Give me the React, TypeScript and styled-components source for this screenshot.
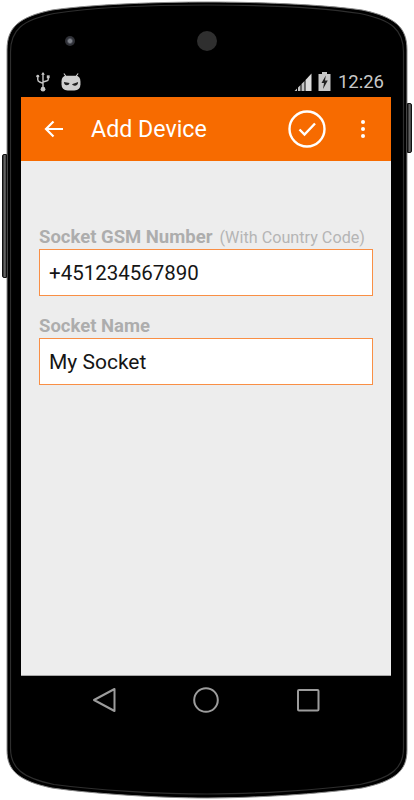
import styled, { createGlobalStyle } from 'styled-components'

const GlobalStyle = createGlobalStyle`
  html, body {
    margin: 0;
    padding: 0;
    background: #fff;
    font-family: Roboto, "Liberation Sans", sans-serif;
  }
`

const ShellPath = () => (
  <ShellSvg viewBox='0 0 414 800' aria-hidden='true'>
    <path
      d='M7 50 C7 27 19 17 52 10 C95 4 160 2 207 2 C254 2 319 4 362 10 C395 17 407 27 407 50 L407 750 C407 771 395 781 362 788 C319 794 254 798 207 798 C160 798 95 794 52 788 C19 781 7 771 7 750 Z'
      fill='#000'
      stroke='#8a8a8a'
      strokeWidth='1'
    />
    <path
      d='M10.5 52 C10.5 30 22 20 54 13.5 C96 7 160 5 207 5 C254 5 318 7 360 13.5 C392 20 403.500 30 403.500 52 L403.500 748 C403.500 768 392 778 360 784.500 C318 790 254 794 207 794 C160 794 96 790 54 784.500 C22 778 10.500 768 10.500 748 Z'
      fill='none'
      stroke='#2e2e2e'
      strokeWidth='1.2'
    />
  </ShellSvg>
)

export default function App() {
  return (
    <>
      <GlobalStyle />
      <Device>
        <ShellPath />
        <SideButton $side='left' />
        <SideButton $side='right' />

        <TopBezel>
          <Camera />
          <Speaker />
        </TopBezel>

        <StatusBar>
          <StatusGroup $gap={11}>
            <svg width='14' height='20' viewBox='0 0 14 21' aria-hidden='true'>
              <path d='M7 1 L7 16 M1.500 5.500 L1.500 8 Q1.500 10 3.500 10.500 L7 12 M12.500 5.500 L12.500 7.500 Q12.500 9 10.500 9.500 L7 10.500' fill='none' stroke='#c4c4c4' strokeWidth='1.5' />
              <path d='M7 0 L9 3 L5 3 Z' fill='#c4c4c4' />
              <circle cx='1.500' cy='4.500' r='1.500' fill='#c4c4c4' />
              <rect x='11' y='3.500' width='3' height='3' fill='#c4c4c4' />
              <circle cx='7' cy='18' r='2.500' fill='#c4c4c4' />
            </svg>
            <svg width='20' height='18' viewBox='0 0 21 19' aria-hidden='true'>
              <path d='M3 0.500 L5.500 4 M18 0.500 L15.500 4' stroke='#cfcfcf' strokeWidth='1.2' />
              <path d='M6 3 H15 Q20.500 3 20.500 9 V12 Q20.500 18.500 14 18.500 H7 Q0.500 18.500 0.500 12 V9 Q0.500 3 6 3 Z' fill='#cfcfcf' />
              <path d='M3 9.500 L9 10.500 Q8.500 13 6 13 Q3.500 13 3 9.500 Z M11.500 12 L18 9.500 Q18 13 15 13.500 Q12.500 13.800 11.500 12 Z' fill='#222' />
            </svg>
          </StatusGroup>
          <StatusGroup $gap={6}>
            <svg width='18' height='18' viewBox='0 0 18 18' aria-hidden='true'>
              <path d='M0.500 18 L3 15.500 V18 Z M4 14.500 L6.500 12 V18 H4 Z M7.500 11 L10.500 8 V18 H7.500 Z' fill='#c4c4c4' />
              <path d='M11.500 7 L17.500 0.500 V18 H11.500 Z' fill='#dcdcdc' />
            </svg>
            <svg width='13' height='19' viewBox='0 0 13 19' aria-hidden='true'>
              <path d='M4 0 H9 V2 H12.500 V19 H0.500 V2 H4 Z' fill='#c8c8c8' />
              <path d='M7.800 3.500 L3.500 11 H6 L5 17 L9.800 8.500 H7 Z' fill='#222' />
            </svg>
            <Clock>12:26</Clock>
          </StatusGroup>
        </StatusBar>

        <ActionBar>
          <BackArrow viewBox='0 0 20 18' aria-hidden='true'>
            <path d='M19 9 H2 M9.500 1.500 L2 9 L9.500 16.500' fill='none' stroke='#fff' strokeWidth='2.200' />
          </BackArrow>
          <Title>Add Device</Title>
          <ConfirmIcon viewBox='0 0 38 38' aria-hidden='true'>
            <circle cx='19' cy='19' r='17.500' fill='none' stroke='#fff' strokeWidth='2.400' />
            <path d='M11.500 19.500 L16.500 24.500 L27 13.500' fill='none' stroke='#fff' strokeWidth='2.400' />
          </ConfirmIcon>
          <Overflow>
            <Dot />
            <Dot />
            <Dot />
          </Overflow>
        </ActionBar>

        <Content>
          <Field>
            <LabelRow>
              <Label>Socket GSM Number</Label>
              <Hint>(With Country Code)</Hint>
            </LabelRow>
            <InputBox $size={20.5}>+451234567890</InputBox>
          </Field>
          <Field>
            <LabelRow>
              <Label>Socket Name</Label>
            </LabelRow>
            <InputBox $size={21}>My Socket</InputBox>
          </Field>
        </Content>

        <NavBar>
          <svg width='24' height='26' viewBox='0 0 24 26' aria-hidden='true'>
            <path d='M22.500 2 V24 L2 13 Z' fill='none' stroke='#9c9c9c' strokeWidth='2' strokeLinejoin='round' />
          </svg>
          <svg width='26' height='26' viewBox='0 0 26 26' aria-hidden='true'>
            <circle cx='13' cy='13' r='11.800' fill='none' stroke='#9c9c9c' strokeWidth='2' />
          </svg>
          <svg width='24' height='24' viewBox='0 0 24 24' aria-hidden='true'>
            <rect x='2' y='2' width='20.500' height='20.500' rx='1' fill='none' stroke='#9c9c9c' strokeWidth='2' />
          </svg>
        </NavBar>
      </Device>
    </>
  )
}

const Device = styled.div`
  position: relative;
  width: 414px;
  height: 800px;
  box-sizing: border-box;
  padding: 0 23px 0 21px;
  display: flex;
  flex-direction: column;
  overflow: hidden;
`

const ShellSvg = styled.svg`
  position: absolute;
  inset: 0;
  width: 414px;
  height: 800px;
`

const SideButton = styled.div<{ $side: 'left' | 'right' }>`
  position: absolute;
  width: 5px;
  box-sizing: border-box;
  background: linear-gradient(to right, #222, #666 45%, #444);
  border: 1px solid #111;
  ${p =>
    p.$side === 'left'
      ? 'left: 2px; top: 154px; height: 124px; border-radius: 2px 0 0 2px;'
      : 'right: 2px; top: 103px; height: 50px; border-radius: 0 2px 2px 0;'}
`

const TopBezel = styled.div`
  position: relative;
  height: 68px;
  box-sizing: border-box;
  padding: 32px 0 0 44px;
  display: flex;
  align-items: flex-start;
  gap: 122px;
`

const Camera = styled.div`
  width: 10px;
  height: 10px;
  margin-top: 4px;
  border-radius: 50%;
  background: radial-gradient(circle, #7d8088 0 22%, #30323a 45%, #2a2a2a 100%);
`

const Speaker = styled.div`
  width: 20px;
  height: 20px;
  margin-top: -1px;
  border-radius: 50%;
  background: #2f2f2f;
`

const StatusBar = styled.div`
  position: relative;
  height: 29px;
  box-sizing: border-box;
  padding: 3px 7px 5px 15px;
  display: flex;
  align-items: center;
  justify-content: space-between;
`

const StatusGroup = styled.div<{ $gap: number }>`
  display: flex;
  align-items: center;
  gap: ${p => p.$gap}px;
`

const Clock = styled.span`
  font-size: 18.500px;
  color: #c8c8c8;
  margin-left: 1px;
`

const ActionBar = styled.header`
  position: relative;
  height: 64px;
  background: #f76b00;
  display: flex;
  align-items: center;
  padding-left: 23px;
`

const BackArrow = styled.svg`
  width: 20px;
  height: 18px;
`

const Title = styled.h1`
  margin: 0 0 0 27px;
  flex: 1;
  font-size: 23.200px;
  font-weight: 400;
  color: #fff;
`

const ConfirmIcon = styled.svg`
  width: 38px;
  height: 38px;
`

const Overflow = styled.div`
  display: flex;
  flex-direction: column;
  gap: 2.500px;
  margin: 0 26px 0 35px;
`

const Dot = styled.span`
  width: 4.500px;
  height: 4.500px;
  border-radius: 50%;
  background: #fff;
`

const Content = styled.main`
  position: relative;
  height: 515px;
  box-sizing: border-box;
  padding: 66px 18px 0;
  background: #ededed;
  border-bottom: 1px solid #a8a8a8;
  display: flex;
  flex-direction: column;
  gap: 20px;
`

const Field = styled.div`
  display: flex;
  flex-direction: column;
  gap: 2px;
`

const LabelRow = styled.div`
  display: flex;
  align-items: baseline;
  gap: 7px;
  height: 20px;
  line-height: 20px;
  white-space: nowrap;
`

const Label = styled.span`
  font-size: 18.500px;
  font-weight: 700;
  color: #adadad;
`

const Hint = styled.span`
  font-size: 16.200px;
  color: #b5b5b5;
`

const InputBox = styled.div<{ $size: number }>`
  height: 47px;
  box-sizing: border-box;
  border: 1px solid #f98f45;
  background: #fff;
  padding: 0 9px;
  font-size: ${p => p.$size}px;
  line-height: 47px;
  color: #151515;
`

const NavBar = styled.nav`
  position: relative;
  display: flex;
  align-items: center;
  justify-content: space-between;
  box-sizing: border-box;
  height: 48px;
  padding: 0 71px;
`
